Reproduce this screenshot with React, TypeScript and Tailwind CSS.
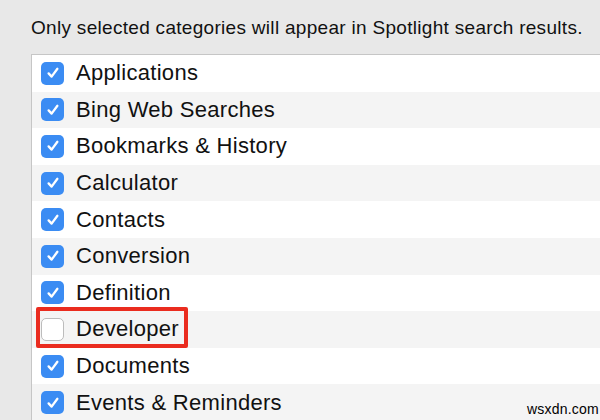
import React from 'react'

const categories: { name: string; checked: boolean }[] = [
  { name: 'Applications', checked: true },
  { name: 'Bing Web Searches', checked: true },
  { name: 'Bookmarks & History', checked: true },
  { name: 'Calculator', checked: true },
  { name: 'Contacts', checked: true },
  { name: 'Conversion', checked: true },
  { name: 'Definition', checked: true },
  { name: 'Developer', checked: false },
  { name: 'Documents', checked: true },
  { name: 'Events & Reminders', checked: true },
]

function Checkbox({ checked }: { checked: boolean }) {
  if (!checked) {
    return (
      <div className="w-[23px] h-[23px] rounded-[5px] bg-white border border-[#bcbcbc] shrink-0" />
    )
  }
  return (
    <div className="w-[23px] h-[23px] rounded-[5px] bg-[#3b8cf3] flex items-center justify-center shrink-0">
      <svg width="14" height="14" viewBox="0 0 14 14" fill="none">
        <path
          d="M2.6 7.4 L5.6 10.6 L11.4 2.8"
          stroke="white"
          strokeWidth="2.3"
          strokeLinecap="round"
          strokeLinejoin="round"
        />
      </svg>
    </div>
  )
}

export default function App() {
  return (
    <div
      className="relative w-[600px] h-[420px] overflow-hidden bg-[#e8e8e8] text-[#111111]"
      style={{ fontFamily: '"Liberation Sans", Arial, sans-serif' }}
    >
      <p className="pl-[31px] pt-[15px] text-[19px] leading-[25px] tracking-[0.3px] whitespace-nowrap">
        Only selected categories will appear in Spotlight search results.
      </p>

      <div className="ml-[31px] mt-[14px] w-[600px] bg-white border-t border-l border-[#c6c6c6]">
        {categories.map((c, i) => (
          <div
            key={c.name}
            className={
              'h-[36.6px] flex items-center pl-[9px] gap-[12px] ' +
              (i % 2 === 1 ? 'bg-[#f4f4f4]' : 'bg-white')
            }
          >
            <Checkbox checked={c.checked} />
            <span className="text-[22px] leading-none tracking-[0.3px] whitespace-nowrap">
              {c.name}
            </span>
          </div>
        ))}
      </div>

      {/* highlight around Developer */}
      <div className="absolute left-[36px] top-[307px] w-[152px] h-[41px] border-4 border-[#ea2c1f] rounded-[2px]" />

      <span className="absolute left-[527px] top-[399px] text-[14px] tracking-[0.2px] text-black">
        wsxdn.com
      </span>
    </div>
  )
}
